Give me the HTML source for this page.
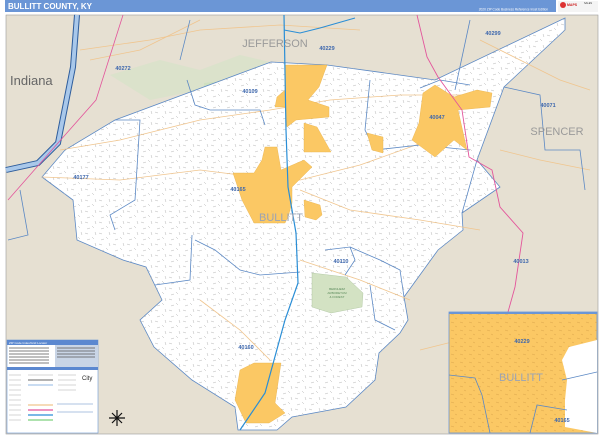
<!DOCTYPE html>
<html><head><meta charset="utf-8"><style>
html,body{margin:0;padding:0;background:#fff;width:600px;height:435px;overflow:hidden}
svg{display:block}
text{font-family:"Liberation Sans",sans-serif}
</style></head><body>
<svg width="600" height="435" viewBox="0 0 600 435" xmlns="http://www.w3.org/2000/svg">
<defs>
<pattern id="dash" width="14" height="11" patternUnits="userSpaceOnUse">
<path d="M1 2l3 1M8 6l2 2M3 9l3-1M11 1l1 3" stroke="#b4b4b4" stroke-width="0.5"/>
</pattern>
<pattern id="dash2" width="9" height="8" patternUnits="userSpaceOnUse">
<path d="M1 2l3 1M5 6l2 1" stroke="#d9a34a" stroke-width="0.5"/>
</pattern>
<clipPath id="cty"><path d="M271 62 L327 65 L385 73 L435 80 L565 18 L565 30 L504 87 L477 160 L500 187 L462 213 L463 230 L438 250 L404 297 L408 320 L400 333 L379 353 L375 380 L346 407 L292 417 L277 430 L238 430 L235 407 L192 380 L154 347 L140 320 L162 300 L146 267 L123 260 L77 240 L73 200 L42 177 L65 150 L115 120 Z"/></clipPath>
</defs>
<rect width="600" height="435" fill="#fff"/>
<rect x="5" y="0" width="551" height="12" fill="#6b96d6"/>
<text x="8" y="9" font-size="8" font-weight="bold" fill="#fff">BULLITT COUNTY, KY</text>
<text x="548" y="10.5" font-size="3.2" fill="#fff" text-anchor="end">2020 ZIP Code Business Reference Inset Edition</text>
<rect x="558" y="1" width="40" height="11" fill="#f4f4f4"/>
<circle cx="563" cy="5" r="3" fill="#d33"/>
<text x="567" y="6" font-size="3.5" fill="#c22" font-weight="bold">MAPS</text>
<text x="584" y="4" font-size="2.5" fill="#333">SALES</text>
<rect x="6" y="15" width="592" height="419" fill="#e6e0d2" stroke="#999" stroke-width="0.6"/>
<path d="M110 75 L160 60 L200 70 L240 55 L270 62 L200 90 L150 100 Z" fill="#d6e3c8" opacity="0.7"/>
<path d="M204 83 L231 80 L229 100 L206 100 Z" fill="#cfe0bf"/>
<path d="M77 15 L73 67 L58 143 L38 163 L6 170" fill="none" stroke="#2e5d9c" stroke-width="6"/>
<path d="M77 15 L73 67 L58 143 L38 163 L6 170" fill="none" stroke="#a9c8ea" stroke-width="4"/>
<path d="M271 62 L327 65 L385 73 L435 80 L565 18 L565 30 L504 87 L477 160 L500 187 L462 213 L463 230 L438 250 L404 297 L408 320 L400 333 L379 353 L375 380 L346 407 L292 417 L277 430 L238 430 L235 407 L192 380 L154 347 L140 320 L162 300 L146 267 L123 260 L77 240 L73 200 L42 177 L65 150 L115 120 Z" fill="#fff" stroke="#5b88c4" stroke-width="0.8"/>
<rect x="0" y="0" width="600" height="435" fill="url(#dash)" clip-path="url(#cty)"/>
<g fill="none" stroke="#f0c58e" stroke-width="0.8">
<path d="M60 150 L120 140 L200 120 L270 110 L330 100 L400 95 L470 95"/>
<path d="M42 177 L120 180 L200 170 L240 175 L300 180 L360 165 L430 140"/>
<path d="M300 190 L350 210 L420 220 L480 230"/>
<path d="M80 50 L150 40 L200 30 L280 25 L360 30"/>
<path d="M90 60 L140 50 L200 20"/>
<path d="M300 260 L330 270 L360 280 L410 300"/>
<path d="M480 40 L520 60 L560 80 L590 90"/>
<path d="M500 150 L540 160 L590 170"/>
<path d="M420 350 L500 330 L560 320"/>
<path d="M200 300 L240 330 L270 360"/>
</g>
<g fill="none" stroke="#5b88c4" stroke-width="0.8">
<path d="M115 120 L140 120 L135 200 L110 215 L115 230"/>
<path d="M187 80 L195 105 L210 110 L260 110 L265 125"/>
<path d="M370 80 L365 130 L375 150 L420 145 L470 150"/>
<path d="M420 88 L440 80 L470 85"/>
<path d="M195 240 L215 250 L240 270 L260 275 L300 272"/>
<path d="M325 250 L350 247 L355 260 L345 275"/>
<path d="M350 247 L380 260 L400 270 L404 297"/>
<path d="M192 235 L190 280 L155 285"/>
<path d="M477 160 L462 213"/>
<path d="M504 87 L540 95 L545 150 L580 150 L585 190"/>
<path d="M470 20 L455 90"/>
<path d="M190 20 L180 60"/>
<path d="M20 190 L28 235 L8 240"/>
<path d="M370 285 L375 320 L395 330"/>
</g>
<g fill="#fbc864" stroke="#e9b046" stroke-width="0.4">
<path d="M285 65 L327 65 L319 87 L308 100 L329 107 L329 117 L296 120 L287 127 L285 107 L275 107 L277 97 L285 90 Z"/>
<path d="M304 123 L317 127 L331 152 L304 152 Z"/>
<path d="M265 147 L277 147 L281 170 L304 160 L312 167 L292 187 L292 203 L288 217 L285 223 L254 223 L242 200 L233 173 L254 173 L262 160 Z"/>
<path d="M304 200 L320 205 L322 215 L316 220 L305 217 Z"/>
<path d="M423 93 L435 85 L454 97 L477 90 L492 93 L490 107 L458 110 L467 150 L454 140 L435 157 L412 140 L419 123 Z"/>
<path d="M367 133 L383 137 L383 153 L372 150 Z"/>
<path d="M254 363 L281 363 L275 403 L285 413 L269 423 L246 423 L235 400 L240 370 Z"/>
</g>
<path d="M312 273 L346 277 L363 293 L362 307 L331 313 L312 307 Z" fill="#d3e2c3" stroke="#a8c29a" stroke-width="0.4"/>
<text x="337" y="290" font-size="3" fill="#5a8a5a" text-anchor="middle">BERNHEIM</text>
<text x="337" y="294" font-size="3" fill="#5a8a5a" text-anchor="middle">ARBORETUM</text>
<text x="337" y="298" font-size="3" fill="#5a8a5a" text-anchor="middle">&amp; FOREST</text>
<path d="M417 15 L427 57 L438 77 L462 110 L469 157 L492 170 L500 207 L523 233 L515 287 L508 312" fill="none" stroke="#e3559b" stroke-width="0.9"/>
<path d="M123 15 L96 100 L58 143 L8 200" fill="none" stroke="#e3559b" stroke-width="0.8"/>
<path d="M284 15 L286 130 L288 187 L296 233 L298 283 L285 320 L265 393 L240 430" fill="none" stroke="#2a8ed6" stroke-width="1.2"/>
<path d="M284 30 L300 33 L320 28 L355 18" fill="none" stroke="#2a8ed6" stroke-width="1"/>
<g fill="#3d67ad" font-size="5.5" font-weight="bold" text-anchor="middle">
<text x="327" y="50">40229</text><text x="493" y="35">40299</text><text x="123" y="70">40272</text>
<text x="250" y="93">40109</text><text x="437" y="119">40047</text><text x="548" y="107">40071</text>
<text x="81" y="179">40177</text><text x="238" y="191">40165</text><text x="341" y="263">40110</text>
<text x="521" y="263">40013</text><text x="246" y="349">40160</text>
</g>
<g fill="#9a9a9a" text-anchor="middle">
<text x="275" y="47" font-size="11">JEFFERSON</text>
<text x="557" y="135" font-size="11">SPENCER</text>
<text x="281" y="221" font-size="11" fill="#9aa3b5">BULLITT</text>
</g>
<text x="10" y="85" font-size="13" fill="#666">Indiana</text>
<rect x="449" y="312" width="148" height="121" fill="#fbc864" stroke="#6b96d6" stroke-width="0.8"/>
<rect x="449" y="314" width="148" height="119" fill="url(#dash2)"/>
<rect x="449" y="312" width="148" height="2" fill="#6b96d6"/>
<path d="M569 347 L597 340 L597 433 L565 427 L565 400 L567 380 L562 360 Z" fill="#fff"/>
<path d="M449 375 L475 378 L482 395 L490 433" fill="none" stroke="#5b88c4" stroke-width="0.8"/>
<path d="M530 433 L537 405 L567 410" fill="none" stroke="#5b88c4" stroke-width="0.8"/>
<path d="M562 380 L597 372" fill="none" stroke="#5b88c4" stroke-width="0.8"/>
<text x="522" y="343" font-size="5.5" font-weight="bold" fill="#3d67ad" text-anchor="middle">40229</text>
<text x="521" y="381" font-size="11" fill="#9aa3b5" text-anchor="middle">BULLITT</text>
<text x="562" y="422" font-size="5.5" font-weight="bold" fill="#3d67ad" text-anchor="middle">40165</text>
<rect x="7" y="340" width="91" height="93" fill="#fff" stroke="#6b96d6" stroke-width="0.6"/>
<rect x="7" y="340" width="91" height="5" fill="#5b88d0"/>
<text x="9" y="344" font-size="3" fill="#fff">ZIP Code Index/Grid Locator</text>
<rect x="55" y="345" width="43" height="22" fill="#c9d5e6"/>
<g stroke="#555" stroke-width="0.8">
<path d="M9 348h40M9 351h40M9 354h40M9 357h40M9 360h40M9 363h40M57 348h38M57 351h38M57 354h38M57 357h38"/>
</g>
<rect x="7" y="367" width="91" height="3" fill="#5b88d0"/>
<g stroke-width="1.2">
<path d="M28 375h25" stroke="#ddd"/><path d="M28 380h25" stroke="#888"/><path d="M28 385h25" stroke="#a9c8ea"/>
<path d="M28 405h25" stroke="#f0c58e"/><path d="M28 410h25" stroke="#e3559b"/><path d="M28 415h25" stroke="#2a8ed6"/><path d="M28 420h25" stroke="#7ed07e"/>
</g>
<g stroke="#aaa" stroke-width="0.6"><path d="M9 375h12M9 380h12M9 385h12M9 390h12M9 395h12M9 400h12M9 405h12M9 410h12M9 415h12M9 420h12M58 375h18M58 380h18M58 385h18M58 390h18"/></g>
<text x="82" y="380" font-size="6" fill="#222">City</text>
<path d="M57 404h36M57 412h36" stroke="#5b88c4" stroke-width="0.6"/>
<g stroke="#111" stroke-width="1.2"><path d="M117 410v16M109 418h16M112 413l10 10M122 413l-10 10"/></g>
</svg>
</body></html>
